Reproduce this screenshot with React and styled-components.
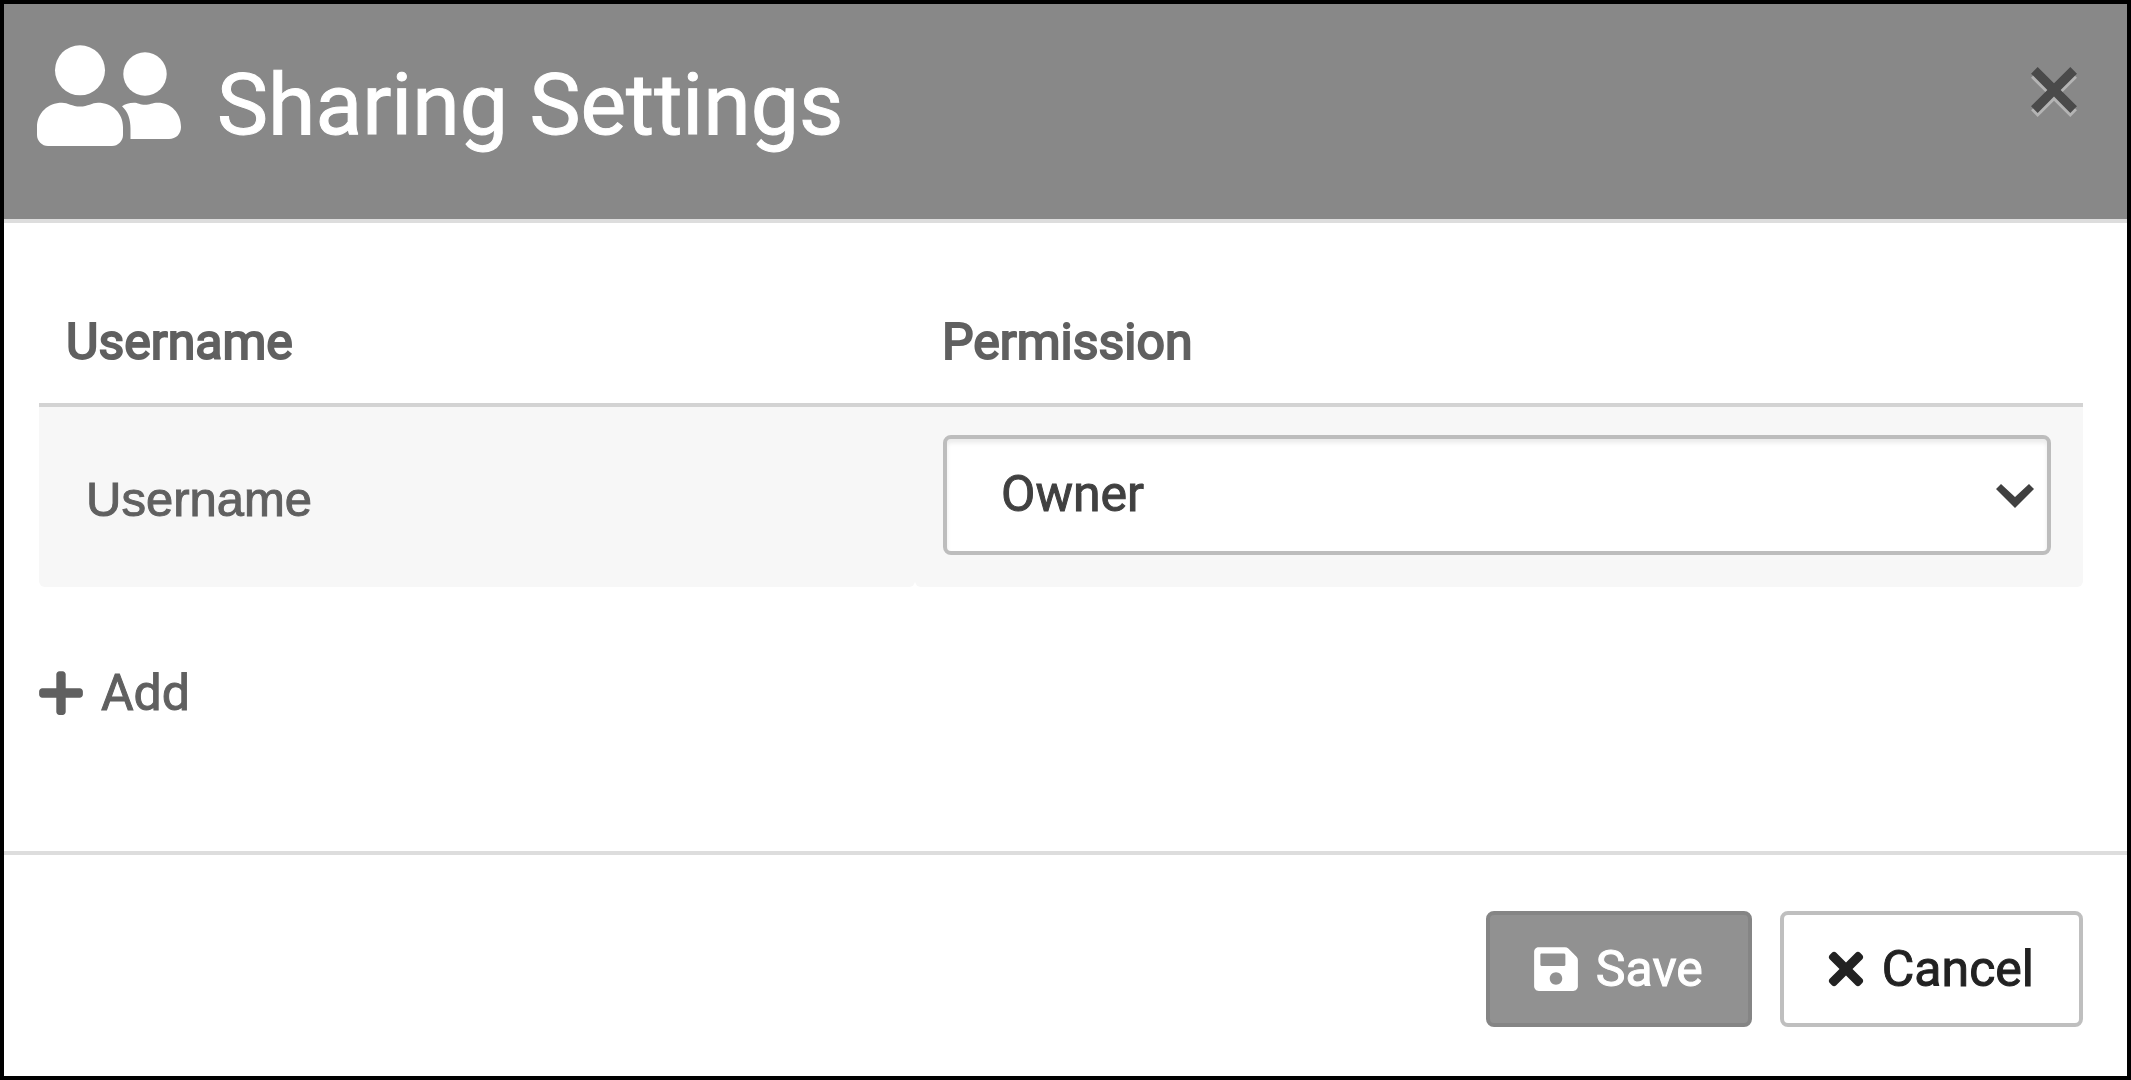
import React, { useState } from "react";
import styled, { createGlobalStyle } from "styled-components";
import { FaPlus, FaSave, FaTimes } from "react-icons/fa";

const App = () => {
  const [permission, setPermission] = useState("owner");

  return (
    <>
      <GlobalStyle />
      <Dialog role="dialog" aria-labelledby="dialog-title">
        <Header>
          <PeopleIcon viewBox="0 0 144 102" aria-hidden="true">
            <circle cx="43" cy="25.3" r="25" />
            <circle cx="108" cy="29" r="21.7" />
            <path d="M0 82C0 68 11 57.7 25 57.7C31 57.7 35 61.5 43 61.5C51 61.5 55 57.7 61 57.7C75 57.7 86 68 86 82V90C86 96 81 101 75 101H11C5 101 0 96 0 90Z" />
            <path d="M85 61.3C88 59 92 57.7 97 57.7C101 57.7 103 59.8 108 59.8C113 59.8 115 57.7 121 57.7C134 57.7 144 68 144 82C144 89 139 94 132 94H93.5V84C93.5 74 91 67 85 61.3Z" />
          </PeopleIcon>
          <Title id="dialog-title">Sharing Settings</Title>
          <CloseButton type="button" aria-label="Close">
            <svg viewBox="0 0 45 49" aria-hidden="true">
              <path d={CROSS} fill="#b4b4b4" transform="translate(0 4)" />
              <path d={CROSS} fill="#4a4a4a" />
            </svg>
          </CloseButton>
        </Header>

        <Body>
          <Table>
            <thead>
              <tr>
                <Th $width="calc(100% * 3 / 7)">Username</Th>
                <Th>Permission</Th>
              </tr>
            </thead>
            <tbody>
              <tr>
                <NameCell>Username</NameCell>
                <Td>
                  <SelectBox>
                    <Select
                      aria-label="Permission"
                      value={permission}
                      onChange={(e) => setPermission(e.target.value)}
                    >
                      <option value="owner">Owner</option>
                      <option value="editor">Editor</option>
                      <option value="viewer">Viewer</option>
                    </Select>
                    <Chevron viewBox="0 0 38 24" aria-hidden="true">
                      <path d="M5 0L19 13L33 0L38 5L19 24L0 5Z" />
                    </Chevron>
                  </SelectBox>
                </Td>
              </tr>
            </tbody>
          </Table>

          <AddButton type="button">
            <FaPlus />
            Add
          </AddButton>
        </Body>

        <Footer>
          <Button type="button" $primary>
            <FaSave />
            Save
          </Button>
          <Button type="button" $iconWidth={36}>
            <FaTimes />
            Cancel
          </Button>
        </Footer>
      </Dialog>
    </>
  );
};

export default App;

const CROSS =
  "M6.5 0L22.5 16L38.5 0L45 6.5L29 22.5L45 38.5L38.5 45L22.5 29L6.5 45L0 38.5L16 22.5L0 6.5Z";

const GlobalStyle = createGlobalStyle`
  * {
    box-sizing: border-box;
  }

  body {
    margin: 0;
    background-color: #fff;
    font-family: Roboto, "Liberation Sans", sans-serif;
    font-size: 50px;
    -webkit-text-stroke: 1px currentColor;
  }
`;

const Dialog = styled.div`
  min-height: 100vh;
  display: flex;
  flex-direction: column;
  border: 4px solid #000;
  background-color: #fff;
`;

const Header = styled.header`
  display: flex;
  align-items: flex-start;
  padding: 41px 50px 54px 33px;
  background-color: #888;
  border-bottom: 4px solid #ddd;
`;

const PeopleIcon = styled.svg`
  width: 144px;
  height: 102px;
  flex-shrink: 0;
  fill: #fff;
`;

const Title = styled.h1`
  flex: 1;
  margin: 0 0 0 36px;
  color: #fff;
  font-size: 86px;
  font-weight: 400;
  line-height: 120px;
`;

const CloseButton = styled.button`
  margin-top: 22px;
  padding: 0;
  border: none;
  background: none;
  cursor: pointer;

  svg {
    display: block;
    width: 46px;
    height: 50px;
  }
`;

const Body = styled.main`
  flex: 1;
  padding: 72px 44px 0 35px;
  color: #606060;
`;

const Table = styled.table`
  width: 100%;
  table-layout: fixed;
  border-collapse: separate;
  border-spacing: 0;
`;

const Th = styled.th`
  width: ${({ $width }) => $width ?? "auto"};
  padding: 15px 27px 29px;
  border-bottom: 4px solid #d3d3d3;
  font-weight: 400;
  line-height: 64px;
  text-align: left;
  -webkit-text-stroke: 2px currentColor;
`;

const Td = styled.td`
  padding: 28px 32px 32px 28px;
  border-radius: 0 0 6px 6px;
  background-color: #f7f7f7;
`;

const NameCell = styled(Td)`
  padding: 32px 28px 28px 47px;
  font-family: "Liberation Sans", Arial, sans-serif;
  font-size: 49px;
`;

const SelectBox = styled.div`
  position: relative;
`;

const Select = styled.select`
  display: block;
  width: 100%;
  height: 120px;
  padding: 0 56px 2px 54px;
  border: 4px solid #bdbdbd;
  border-radius: 8px;
  background-color: #fff;
  box-shadow: inset 0 4px 4px rgba(0, 0, 0, 0.08);
  color: #404040;
  font-family: inherit;
  font-size: 50px;
  appearance: none;
`;

const Chevron = styled.svg`
  position: absolute;
  top: 49px;
  right: 17px;
  width: 38px;
  height: 24px;
  fill: #404040;
  pointer-events: none;
`;

const AddButton = styled.button`
  display: flex;
  align-items: center;
  gap: 18px;
  margin-top: 74px;
  padding: 0;
  border: none;
  background: none;
  color: #606060;
  font-family: inherit;
  font-size: 50px;
  line-height: 64px;
  cursor: pointer;

  svg {
    width: 44px;
    height: 50px;
  }
`;

const Footer = styled.footer`
  display: flex;
  justify-content: flex-end;
  gap: 28px;
  padding: 56px 44px 49px;
  border-top: 4px solid #ddd;
`;

const Button = styled.button`
  display: flex;
  align-items: center;
  gap: 18px;
  height: 116px;
  padding: 0 45px 0 44px;
  border: 4px solid ${({ $primary }) => ($primary ? "#858585" : "#bfbfbf")};
  border-radius: 8px;
  background-color: ${({ $primary }) => ($primary ? "#919191" : "#fff")};
  color: ${({ $primary }) => ($primary ? "#fff" : "#222")};
  font-family: inherit;
  font-size: 50px;
  cursor: pointer;

  svg {
    width: ${({ $iconWidth }) => $iconWidth ?? 44}px;
    height: 50px;
  }
`;
